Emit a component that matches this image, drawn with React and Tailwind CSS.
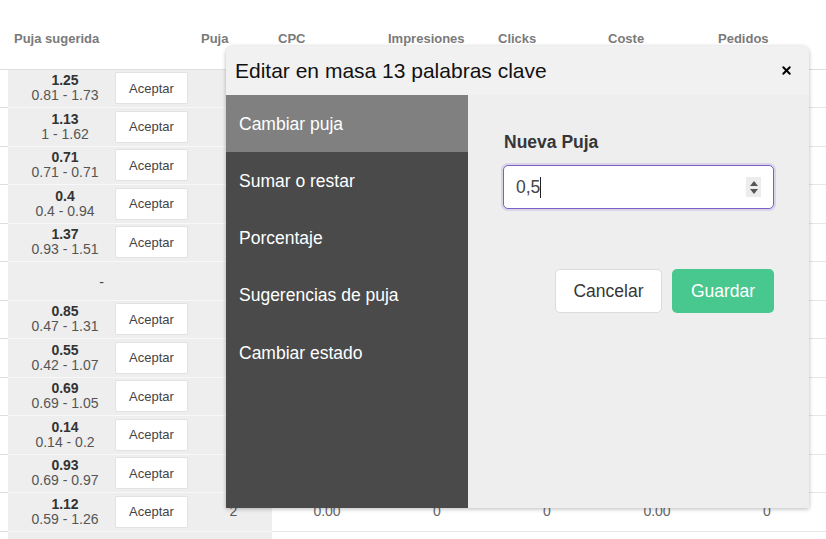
import { X } from 'lucide-react';

const rows = [
  { best: '1.25', range: '0.81 - 1.73' },
  { best: '1.13', range: '1 - 1.62' },
  { best: '0.71', range: '0.71 - 0.71' },
  { best: '0.4', range: '0.4 - 0.94' },
  { best: '1.37', range: '0.93 - 1.51' },
  { dash: true },
  { best: '0.85', range: '0.47 - 1.31' },
  { best: '0.55', range: '0.42 - 1.07' },
  { best: '0.69', range: '0.69 - 1.05' },
  { best: '0.14', range: '0.14 - 0.2' },
  { best: '0.93', range: '0.69 - 0.97' },
  { best: '1.12', range: '0.59 - 1.26', puja: '2', cpc: '0.00', imp: '0', clicks: '0', coste: '0.00', pedidos: '0' },
  { empty: true }
];

const menu = ['Cambiar puja', 'Sumar o restar', 'Porcentaje', 'Sugerencias de puja', 'Cambiar estado'];

const headers = ['CPC', 'Impresiones', 'Clicks', 'Coste', 'Pedidos'];

const App = () => {
  return (
    <div className="relative w-[826px] h-[539px] overflow-hidden bg-white font-['Liberation_Sans',Arial,sans-serif]">
      {/* Keyword table */}
      <table className="table-fixed border-collapse w-[826px]">
        <colgroup>
          <col className="w-[8px]" />
          <col className="w-[187px]" />
          <col className="w-[77px]" />
          <col className="w-[110px]" />
          <col className="w-[110px]" />
          <col className="w-[110px]" />
          <col className="w-[110px]" />
          <col className="w-[110px]" />
          <col className="w-[4px]" />
        </colgroup>
        <thead>
          <tr className="h-[69px]">
            <th className="border-b border-[#dedede]"></th>
            <th className="border-b border-[#dedede] align-top pt-[31px] pl-[6px] text-left text-[13px] leading-[15px] font-bold text-[#7a7a7a]">
              Puja sugerida
            </th>
            <th className="border-b border-[#dedede] align-top pt-[31px] pl-[6px] text-left text-[13px] leading-[15px] font-bold text-[#7a7a7a]">
              Puja
            </th>
            {headers.map((h) => (
              <th
                key={h}
                className="border-b border-[#dedede] align-top pt-[31px] pl-[6px] text-left text-[13px] leading-[15px] font-bold text-[#7a7a7a]"
              >
                {h}
              </th>
            ))}
            <th className="border-b border-[#dedede]"></th>
          </tr>
        </thead>
        <tbody>
          {rows.map((r, i) => (
            <tr key={i} className="h-[38.5px]">
              <td className="border-b border-[#dedede]"></td>
              <td className="bg-[#eeeeee] border-b border-[#f8f8f8] p-0">
                {r.dash && <div className="text-center text-[14px] text-[#444] pt-[4px]">-</div>}
                {r.best && (
                  <div className="flex items-center pl-[7px]">
                    <div className="w-[100px] text-center text-[14px] leading-[15px]">
                      <div className="font-bold text-[#333]">{r.best}</div>
                      <div className="text-[#555]">{r.range}</div>
                    </div>
                    <button className="w-[73px] h-[32px] bg-white border border-[#e2e2e2] rounded-[2px] text-[13px] text-[#444]">
                      Aceptar
                    </button>
                  </div>
                )}
              </td>
              <td className="bg-[#eeeeee] border-b border-[#f8f8f8] text-center text-[14px] text-[#555]">{r.puja}</td>
              <td className="border-b border-[#e6e6e6] text-center text-[14px] text-[#666]">{r.cpc}</td>
              <td className="border-b border-[#e6e6e6] text-center text-[14px] text-[#666]">{r.imp}</td>
              <td className="border-b border-[#e6e6e6] text-center text-[14px] text-[#666]">{r.clicks}</td>
              <td className="border-b border-[#e6e6e6] text-center text-[14px] text-[#666]">{r.coste}</td>
              <td className="border-b border-[#e6e6e6] text-center text-[14px] text-[#666]">{r.pedidos}</td>
              <td className="border-b border-[#e6e6e6]"></td>
            </tr>
          ))}
        </tbody>
      </table>

      {/* Bulk edit dialog */}
      <div className="absolute left-[226px] top-[46px] w-[583px] h-[462px] flex flex-col rounded-t-[7px] overflow-hidden bg-[#eeeeee] shadow-[0_1px_4px_rgba(0,0,0,0.28)]">
        <div className="h-[49px] shrink-0 flex items-center justify-between pl-[9px] pr-[16px] bg-[#f1f1f1]">
          <span className="text-[21px] text-[#111]">Editar en masa 13 palabras clave</span>
          <X className="w-[13px] h-[13px] text-black" strokeWidth={3.5} />
        </div>
        <div className="flex flex-1">
          {/* Sidebar */}
          <div className="w-[242px] bg-[#4a4a4a]">
            {menu.map((item, i) => (
              <div
                key={item}
                className={`h-[57.3px] flex items-center pl-[13px] text-[17.5px] text-white ${
                  i === 0 ? 'bg-[#808080]' : ''
                }`}
              >
                {item}
              </div>
            ))}
          </div>

          {/* Form */}
          <div className="flex-1 bg-[#eeeeee] pt-[36px] pl-[35px] pr-[35px]">
            <div className="pl-[1px] text-[17.5px] leading-[22px] font-bold text-[#363636]">Nueva Puja</div>
            <div className="mt-[12px] h-[44px] flex items-center justify-between bg-white border-[1.5px] border-[#7c5fc7] rounded-[5px] shadow-[0_0_0_2px_rgba(124,95,199,0.18)] pl-[12px] pr-[12px]">
              <div className="flex items-center text-[17.5px] text-[#444]">
                <span>0,5</span>
                <span className="w-px h-[21px] bg-[#222]"></span>
              </div>
              <div className="w-[15px] h-[20px] bg-[#ececec] flex flex-col items-center justify-center gap-[3px]">
                <svg width="8" height="5" viewBox="0 0 8 5">
                  <path d="M4 0 L8 5 L0 5 Z" fill="#555" />
                </svg>
                <svg width="8" height="5" viewBox="0 0 8 5">
                  <path d="M0 0 L8 0 L4 5 Z" fill="#555" />
                </svg>
              </div>
            </div>
            <div className="mt-[60px] flex justify-end gap-[10px]">
              <button className="w-[107px] h-[44px] bg-white border border-[#dbdbdb] rounded-[5px] text-[17.5px] text-[#363636]">
                Cancelar
              </button>
              <button className="w-[102px] h-[44px] bg-[#48c78e] rounded-[5px] text-[17.5px] text-white">
                Guardar
              </button>
            </div>
          </div>
        </div>
      </div>
    </div>
  );
};

export default App;
